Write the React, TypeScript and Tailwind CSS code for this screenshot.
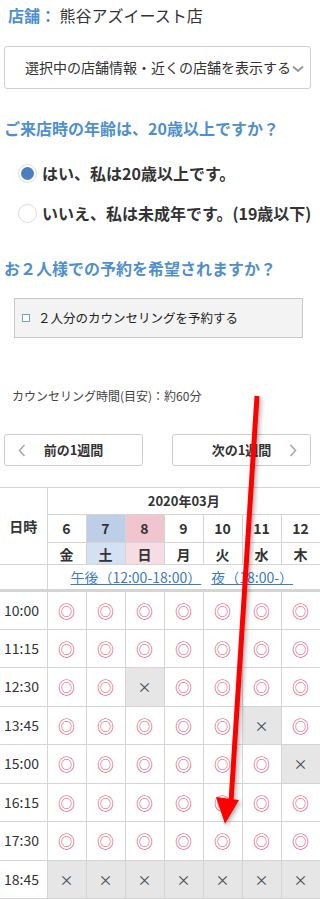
import React from 'react';

const font = { fontFamily: '"Noto Sans CJK JP", "Noto Sans", sans-serif' };

const DAYS = [
  { d: '6', w: '金', kind: '' },
  { d: '7', w: '土', kind: 'sat' },
  { d: '8', w: '日', kind: 'sun' },
  { d: '9', w: '月', kind: '' },
  { d: '10', w: '火', kind: '' },
  { d: '11', w: '水', kind: '' },
  { d: '12', w: '木', kind: '' },
];

// o = 空き, x = 満席
const SLOTS: { t: string; s: string }[] = [
  { t: '10:00', s: 'ooooooo' },
  { t: '11:15', s: 'ooooooo' },
  { t: '12:30', s: 'ooxoooo' },
  { t: '13:45', s: 'oooooxo' },
  { t: '15:00', s: 'oooooox' },
  { t: '16:15', s: 'ooooooo' },
  { t: '17:30', s: 'ooooooo' },
  { t: '18:45', s: 'xxxxxxx' },
];

const cell = 'border border-[#d4d4d4] text-center';

const Chevron = ({ dir }: { dir: 'l' | 'r' }) => (
  <svg width="8" height="13" viewBox="0 0 8 13" className={`absolute top-[9px] ${dir === 'l' ? 'left-[13px]' : 'right-[13px]'}`}>
    <path d={dir === 'l' ? 'M6.5 1 1.5 6.5l5 5.5' : 'M1.5 1l5 5.5-5 5.5'} fill="none" stroke="#aaa" strokeWidth="1.6" />
  </svg>
);

export default function App() {
  return (
    <div className="relative w-[320px] overflow-hidden bg-white text-[#333]" style={font}>
      <div className="px-1 pt-[3px]">
        <p className="whitespace-nowrap pl-1 text-[16px] leading-[24px]">
          <span className="font-bold text-[#4f8fd0]">店舗：</span> 熊谷アズイースト店
        </p>

        <button type="button" className="mt-[19px] flex h-[43px] w-[307px] items-center rounded-[3px] border border-[#cfcfcf] bg-white pl-[20px] text-[14px] text-[#333]">
          <span className="whitespace-nowrap">選択中の店舗情報・近くの店舗を表示する</span>
          <svg width="12" height="8" viewBox="0 0 12 8" className="ml-[1px] mt-[3px]">
            <path d="M1 1.5 6 6l5-4.5" fill="none" stroke="#999" strokeWidth="2" />
          </svg>
        </button>

        <h2 className="mt-[27px] whitespace-nowrap text-[16px] font-bold leading-[24px] text-[#4f8fd0]">ご来店時の年齢は、20歳以上ですか？</h2>

        <div className="mt-[21px] space-y-[16px] pl-[14px] text-[16px] font-bold leading-[24px]">
          <label className="flex items-center gap-[5px] whitespace-nowrap">
            <span className="flex h-[19px] w-[19px] shrink-0 items-center justify-center rounded-full border border-[#ddd] bg-white">
              <span className="h-[13px] w-[13px] rounded-full bg-[#4a80c0]" />
            </span>
            はい、私は20歳以上です。
          </label>
          <label className="flex items-center gap-[5px] whitespace-nowrap">
            <span className="h-[19px] w-[19px] shrink-0 rounded-full border border-[#ddd] bg-white" />
            いいえ、私は未成年です。(19歳以下)
          </label>
        </div>

        <h2 className="mt-[31px] whitespace-nowrap text-[16px] font-bold leading-[24px] text-[#4f8fd0]">お２人様での予約を希望されますか？</h2>

        <div className="ml-[10px] mt-[18px] flex h-[40px] w-[289px] items-center border border-[#c8c8c8] bg-[#f3f3f3] pl-[7px] text-[12.5px] text-[#222]">
          <span className="h-[8px] w-[8px] border border-[#7a9cc8] bg-white" />
          <span className="ml-[8px]">２人分のカウンセリングを予約する</span>
        </div>

        <p className="ml-[8px] mt-[49px] text-[12px] leading-[18px] text-[#444]">カウンセリング時間(目安)：約60分</p>

        <div className="mt-[29px] flex justify-between pr-[5px] text-[13px] font-bold">
          <button type="button" className="relative flex h-[32px] w-[139px] items-center justify-center rounded-[3px] border border-[#ccc] bg-white">
            <Chevron dir="l" />
            前の1週間
          </button>
          <button type="button" className="relative flex h-[32px] w-[139px] items-center justify-center rounded-[3px] border border-[#ccc] bg-white">
            次の1週間
            <Chevron dir="r" />
          </button>
        </div>
      </div>

      <table className="mt-[21px] w-[320px] table-fixed border-collapse text-[13px]">
        <colgroup>
          <col className="w-[47px]" />
          {DAYS.map((d) => <col key={d.d} className="w-[39px]" />)}
        </colgroup>
        <thead>
          <tr className="h-[27px]">
            <th rowSpan={3} className={`${cell} border-l-0 text-[14px] font-bold`}>日時</th>
            <th colSpan={7} className={`${cell} border-r-0 font-bold`}>2020年03月</th>
          </tr>
          <tr className="h-[28px]">
            {DAYS.map((d) => (
              <td key={d.d} className={`${cell} text-[14px] font-bold ${d.kind === 'sat' ? 'bg-[#bccfe7]' : d.kind === 'sun' ? 'bg-[#f1c5cd]' : ''}`}>{d.d}</td>
            ))}
          </tr>
          <tr className="h-[22px]">
            {DAYS.map((d) => (
              <td key={d.d} className={`${cell} text-[14px] font-bold leading-[18px] ${d.kind === 'sat' ? 'bg-[#d3e1f2]' : d.kind === 'sun' ? 'bg-[#f6dce3]' : ''}`}>{d.w}</td>
            ))}
          </tr>
          <tr className="h-[26px]">
            <td className={`${cell} border-l-0`} />
            <td colSpan={7} className={`${cell} whitespace-nowrap border-r-0 pr-[4px] text-[14px] leading-[20px] text-[#3d7bc4]`}>
              <span className="underline">午後（12:00-18:00）</span>
              <span className="ml-[10px] underline">夜（18:00-）</span>
            </td>
          </tr>
        </thead>
        <tbody className="border-t-[3px] border-[#d4d4d4]">
          {SLOTS.map((r) => (
            <tr key={r.t} className="h-[38.5px]">
              <td className={`${cell} border-l-0 pl-[4px] text-left text-[14px]`}>{r.t}</td>
              {r.s.split('').map((c, i) => (
                c === 'o' ? (
                  <td key={i} className={`${cell} text-[17px] text-[#dd4f73]`}>◎</td>
                ) : (
                  <td key={i} className={`${cell} bg-[#e6e6e6] text-[14px] text-[#3f4a56]`}>×</td>
                )
              ))}
            </tr>
          ))}
        </tbody>
      </table>

      {/* 赤い注釈矢印 */}
      <svg className="pointer-events-none absolute left-0 top-0" width="320" height="899" viewBox="0 0 320 899">
        <defs>
          <filter id="sh" x="-50%" y="-10%" width="200%" height="120%">
            <feDropShadow dx="2" dy="2" stdDeviation="2" floodColor="#000" floodOpacity="0.3" />
          </filter>
        </defs>
        <g filter="url(#sh)">
          <path d="M257 396 L231 802" stroke="#ff0000" strokeWidth="5" strokeLinecap="butt" fill="none" />
          <path d="M216 797 L239 800 L225 824 Z" fill="#ff0000" />
        </g>
      </svg>
    </div>
  );
}
